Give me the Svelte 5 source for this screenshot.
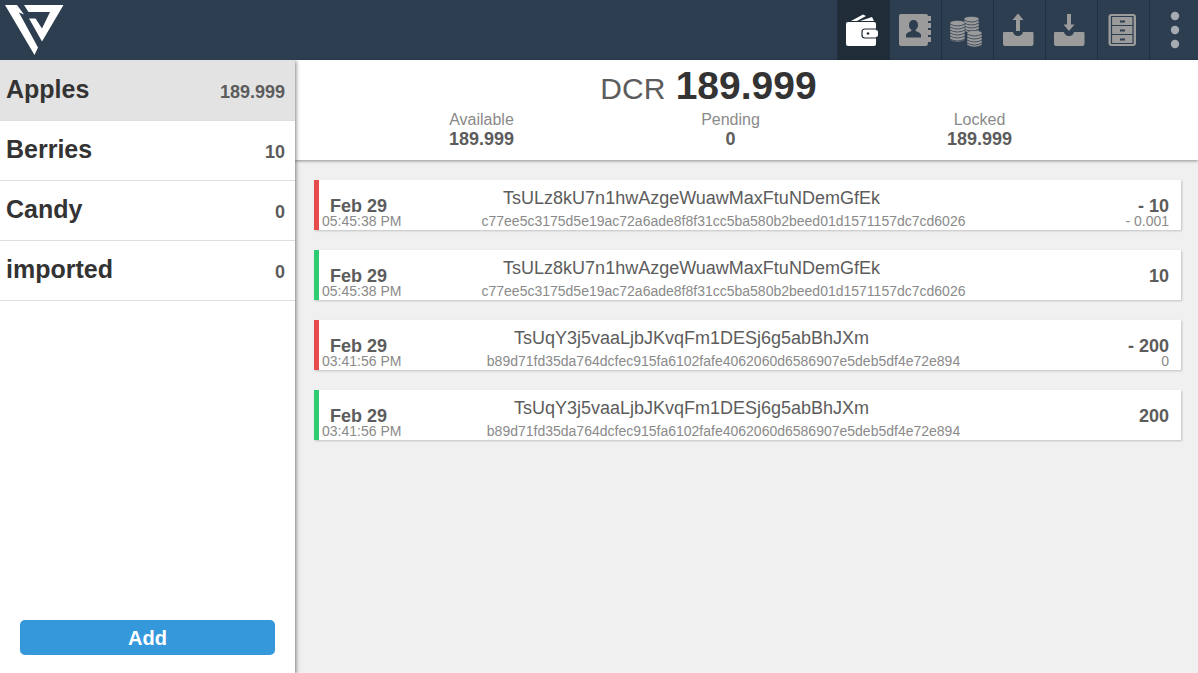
<script lang="ts">
  type Account = { name: string; balance: string };
  type Transaction = {
    date: string;
    time: string;
    address: string;
    hash: string;
    amount: string;
    fee?: string;
    sent: boolean;
  };

  const first = 'c77ee5c3175d5e19ac72a6ade8f8f31cc5ba580b2beed01d1571157dc7cd6026';
  const second = 'b89d71fd35da764dcfec915fa6102fafe4062060d6586907e5deb5df4e72e894';

  let accounts: Account[] = [
    { name: 'Apples', balance: '189.999' },
    { name: 'Berries', balance: '10' },
    { name: 'Candy', balance: '0' },
    { name: 'imported', balance: '0' }
  ];

  let transactions: Transaction[] = [
    { date: 'Feb 29', time: '05:45:38 PM', address: 'TsULz8kU7n1hwAzgeWuawMaxFtuNDemGfEk', hash: first, amount: '- 10', fee: '- 0.001', sent: true },
    { date: 'Feb 29', time: '05:45:38 PM', address: 'TsULz8kU7n1hwAzgeWuawMaxFtuNDemGfEk', hash: first, amount: '10', sent: false },
    { date: 'Feb 29', time: '03:41:56 PM', address: 'TsUqY3j5vaaLjbJKvqFm1DESj6g5abBhJXm', hash: second, amount: '- 200', fee: '0', sent: true },
    { date: 'Feb 29', time: '03:41:56 PM', address: 'TsUqY3j5vaaLjbJKvqFm1DESj6g5abBhJXm', hash: second, amount: '200', sent: false }
  ];

  const tabs = ['wallet', 'contacts', 'coins', 'send', 'receive', 'history'];

  let selected = $state('Apples');
  let tab = $state('wallet');
</script>

{#snippet coins(x: number, top: number, bottom: number)}
  <path class="edge" d="M{x} {top + 2}q0-2.500 7.500-2.500t7.500 2.500v{bottom - top - 4}q-7.500 4-15 0z" />
  {#each Array(Math.floor((bottom - top - 3) / 3)) as _, i}
    <path class="cut thin" d="M{x} {top + 3 + i * 3}q7.5 4 15 0" />
  {/each}
{/snippet}

<div class="app">
  <header class="topbar">
    <svg class="logo" viewBox="0 0 70 60" aria-label="Logo">
      <path d="M5 5H17L24 14.500L19 12.500L38 47.500L34.500 55Z" />
      <path d="M24 5H63.500L42 41.500L29 18.500H35.500L42 28.500L50 12H28.500Z" />
    </svg>
    <nav class="tabs">
      {#each tabs as name}
        <button class="tab" class:active={tab === name} aria-label={name} onclick={() => (tab = name)}>
          <svg viewBox="0 0 52 60">
            {#if name === 'wallet'}
              <path d="M14 21L26 14.500L29 16L20 21ZM23 21L35 17L37 21Z" />
              <rect x="9" y="22" width="30" height="24" rx="2" />
              <path class="cut" d="M42 29H28q-3 0-3 3v3q0 3 3 3h14" />
              <rect x="26" y="30" width="15" height="7" rx="2" />
              <circle class="hole" cx="31" cy="33.500" r="1.300" />
            {:else if name === 'contacts'}
              <path d="M12 14H37q2 0 2 2h3v5h-3v2h3v5h-3v2h3v5h-3v2h3v5h-3q0 4-2 4H12q-2 0-2-2V16q0-2 2-2Z" />
              <path class="hole" d="M24.500 20c3 0 4.500 2 4.500 5 0 2-1 4-2.500 5v1c3 1 5.500 2 5.500 4v2.500H17V35c0-2 2.500-3 5.500-4v-1c-1.500-1-2.500-3-2.500-5 0-3 1.500-5 4.500-5Z" />
            {:else if name === 'coins'}
              {@render coins(23, 17, 33)}
              {@render coins(9, 21, 42)}
              {@render coins(26, 31, 47)}
            {:else if name === 'send'}
              <path d="M25 13.500L30.500 20H27V31H23V20H19.500Z" />
              <path d="M11 32H20q1 4 5 4t5-4H39.500q1 0 1 1V44q0 2-2 2H12q-2 0-2-2V33q0-1 1-1Z" />
            {:else if name === 'receive'}
              <path d="M24 31L29.500 24.500H26V14H22V24.500H18.500Z" />
              <path d="M10 32H19q1 4 5 4t5-4H38.500q1 0 1 1V44q0 2-2 2H11q-2 0-2-2V33q0-1 1-1Z" />
            {:else}
              <rect x="11.500" y="14" width="27.500" height="32" rx="3" />
              <path class="cut" d="M14.500 16.500h21.500v27H14.500zM14.500 25.500h21.500M14.500 34.500h21.500" />
              <path class="cut handle" d="M23 21.500h5M23 30.500h5M23 39.500h5" />
            {/if}
          </svg>
        </button>
      {/each}
      <button class="tab more" aria-label="More">
        <svg viewBox="0 0 49 60">
          <circle cx="26" cy="16" r="4.200" />
          <circle cx="26" cy="30" r="4.200" />
          <circle cx="26" cy="44" r="4.200" />
        </svg>
      </button>
    </nav>
  </header>

  <div class="body">
    <aside class="sidebar">
      <div class="accounts">
        {#each accounts as account}
          <button class="account" class:selected={selected === account.name} onclick={() => (selected = account.name)}>
            <span class="name">{account.name}</span>
            <span class="balance">{account.balance}</span>
          </button>
        {/each}
      </div>
      <button class="add">Add</button>
    </aside>

    <main class="content">
      <section class="summary">
        <h1 class="total">DCR <strong>189.999</strong></h1>
        <dl class="totals">
          <div><dt>Available</dt><dd>189.999</dd></div>
          <div><dt>Pending</dt><dd>0</dd></div>
          <div><dt>Locked</dt><dd>189.999</dd></div>
        </dl>
      </section>

      <ul class="transactions">
        {#each transactions as tx}
          <li class="transaction" class:sent={tx.sent}>
            <div class="when">
              <span class="date">{tx.date}</span>
              <span class="small">{tx.time}</span>
            </div>
            <div class="target">
              <span class="address">{tx.address}</span>
              <span class="small">{tx.hash}</span>
            </div>
            <div class="value" class:single={!tx.fee}>
              <span class="amount">{tx.amount}</span>
              {#if tx.fee}
                <span class="small">{tx.fee}</span>
              {/if}
            </div>
          </li>
        {/each}
      </ul>
    </main>
  </div>
</div>

<style>
  :global(body) {
    margin: 0;
  }

  .app {
    display: flex;
    flex-direction: column;
    min-height: 100vh;
    font-family: "Liberation Sans", Arial, sans-serif;
    color: #5c5c5c;
    background-color: #f0f0f0;
  }

  button {
    border: 0;
    padding: 0;
    margin: 0;
    background: none;
    font-family: inherit;
    cursor: pointer;
  }

  .topbar {
    display: flex;
    justify-content: space-between;
    height: 60px;
    background-color: #2c3e50;
  }

  .logo {
    width: 70px;
    height: 60px;
    fill: #fff;
  }

  .tabs {
    display: flex;
  }

  .tab {
    --bar: #2c3e50;
    box-sizing: border-box;
    width: 52px;
    height: 60px;
    box-shadow: inset 1px 0 #213040;
  }

  .tab.more {
    width: 49px;
  }

  .tab.active {
    --bar: #202c38;
    background-color: #202c38;
  }

  .tab svg {
    display: block;
    width: 100%;
    height: 60px;
    fill: #9b9b9b;
  }

  .tab.active svg {
    fill: #fff;
  }

  .tab.more svg {
    fill: #a5abb1;
  }

  .tab .cut {
    fill: none;
    stroke: var(--bar);
    stroke-width: 1.2;
  }

  .tab .thin {
    stroke-width: 0.8;
  }

  .tab .edge {
    stroke: var(--bar);
    stroke-width: 0.5;
  }

  .tab .handle {
    stroke-width: 2;
  }

  .tab .hole {
    fill: var(--bar);
  }

  .body {
    display: flex;
    flex: 1;
  }

  .sidebar {
    display: flex;
    flex-direction: column;
    justify-content: space-between;
    flex: 0 0 295px;
    z-index: 1;
    background-color: #fff;
    box-shadow: 1px 1px 4px rgba(0, 0, 0, 0.5);
    clip-path: inset(0 -8px 0 0);
  }

  .accounts {
    border-top: 1px solid #dde1e5;
  }

  .account {
    display: flex;
    justify-content: space-between;
    align-items: baseline;
    box-sizing: border-box;
    width: 100%;
    height: 60px;
    padding: 0 10px 2px 6px;
    border-bottom: 1px solid #dedede;
    line-height: 56px;
  }

  .account.selected {
    background-color: #e3e3e3;
  }

  .name {
    font-size: 25px;
    font-weight: bold;
    color: #333;
  }

  .balance {
    font-size: 18px;
    font-weight: bold;
    color: #5c5c5c;
  }

  .add {
    height: 35px;
    margin: 18px 20px;
    padding-top: 2px;
    border-radius: 5px;
    background-color: #3498db;
    color: #fff;
    font-size: 20px;
    font-weight: bold;
  }

  .content {
    flex: 1;
    min-width: 0;
  }

  .summary {
    box-sizing: border-box;
    height: 100px;
    padding-top: 4px;
    background-color: #fff;
    box-shadow: 0 1px 3px rgba(0, 0, 0, 0.4);
  }

  .total {
    margin: 0;
    padding-right: 76px;
    font-size: 30px;
    font-weight: normal;
    line-height: 44px;
    text-align: center;
  }

  .total strong {
    margin-left: 2px;
    font-size: 39px;
    color: #333;
  }

  .totals {
    display: grid;
    grid-template-columns: repeat(3, 1fr);
    margin: 0;
    padding: 0 94px 0 62px;
    text-align: center;
  }

  .totals dt {
    font-size: 16px;
    line-height: 18px;
    color: #8a8a8a;
  }

  .totals dd {
    margin: 0;
    font-size: 18px;
    font-weight: bold;
    line-height: 20px;
  }

  .transactions {
    display: flex;
    flex-direction: column;
    gap: 20px;
    margin: 0;
    padding: 20px 17px 20px 19px;
    list-style: none;
  }

  .transaction {
    display: flex;
    align-items: flex-end;
    box-sizing: border-box;
    height: 50px;
    padding: 0 12px 2px 3px;
    border-left: 5px solid #2ecc71;
    background-color: #fff;
    box-shadow: 1px 1px 2px rgba(0, 0, 0, 0.2);
  }

  .transaction.sent {
    border-left-color: #e74c4c;
  }

  .when,
  .target,
  .value {
    display: flex;
    flex-direction: column;
  }

  .when {
    width: 96px;
  }

  .date {
    padding-left: 8px;
  }

  .date,
  .amount {
    font-size: 18px;
    font-weight: bold;
    line-height: 16px;
  }

  .target {
    flex: 1;
    gap: 6px;
    text-align: center;
  }

  .address {
    padding-right: 64px;
    font-size: 18px;
    line-height: 20px;
  }

  .small {
    font-size: 14px;
    line-height: 14px;
    color: #8a8a8a;
  }

  .value {
    width: 140px;
    text-align: right;
  }

  .value.single {
    padding-bottom: 14px;
  }
</style>
